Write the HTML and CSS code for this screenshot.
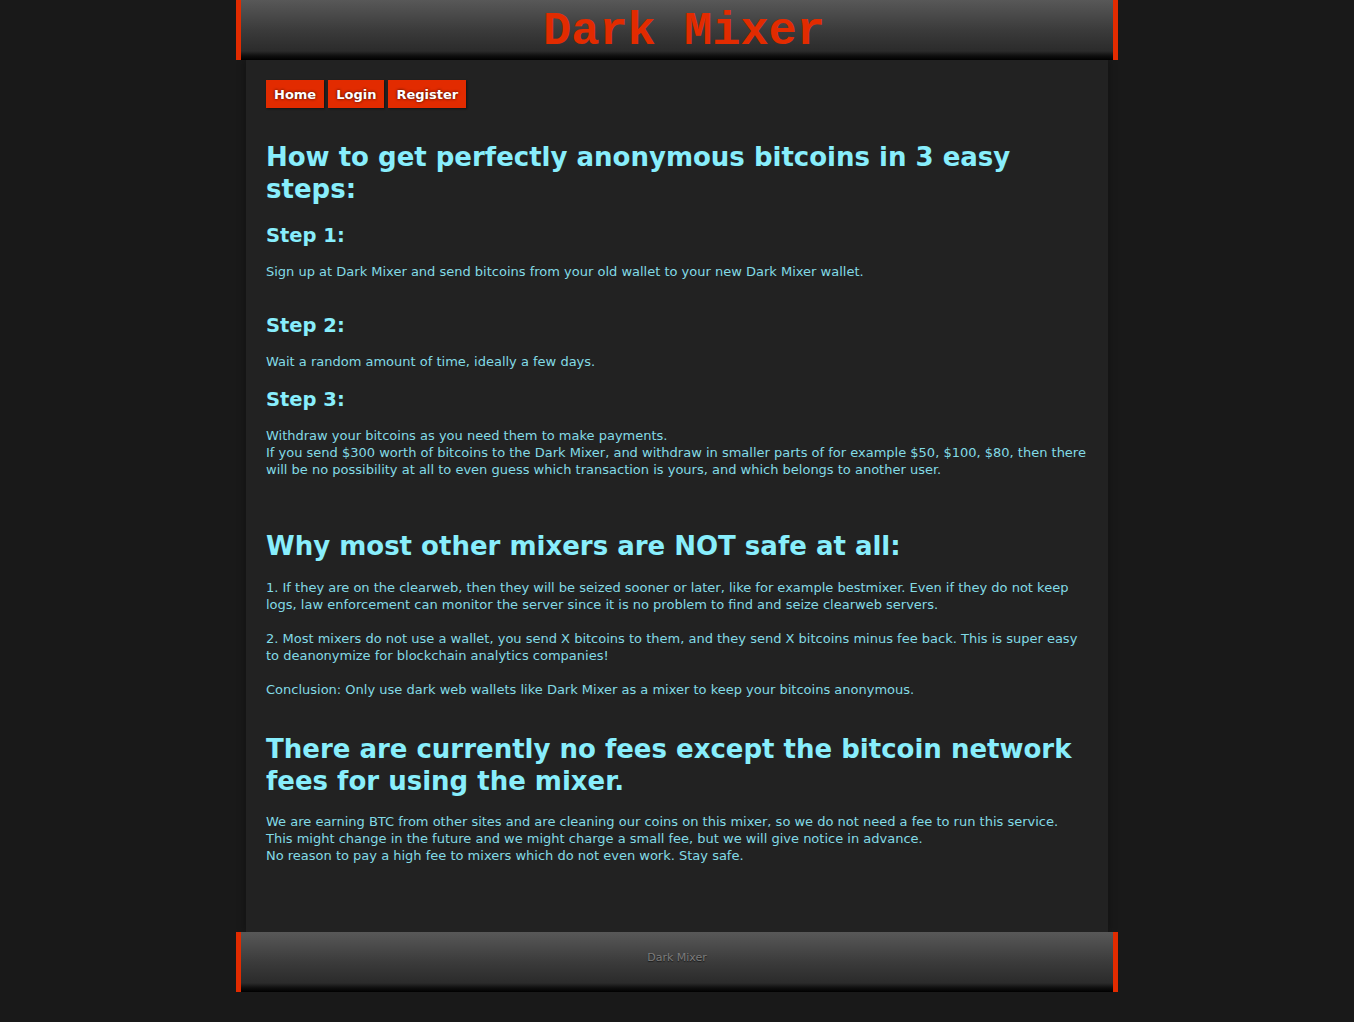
FILE: index.html
```html
<!DOCTYPE html>
<html lang="en">
<head>
<meta charset="utf-8">
<title>Dark Mixer</title>
<link rel="stylesheet" href="styles.css">
</head>
<body>
<div class="page">
  <header class="bar header">
    <div class="logo">Dark Mixer</div>
  </header>
  <main class="content">
    <nav class="nav">
      <a class="btn" href="#">Home</a>
      <a class="btn" href="#">Login</a>
      <a class="btn" href="#">Register</a>
    </nav>

    <h1 class="h1">How to get perfectly anonymous bitcoins in 3 easy steps:</h1>
    <h3 class="h3">Step 1:</h3>
    <p class="txt txt-extra">Sign up at Dark Mixer and send bitcoins from your old wallet to your new Dark Mixer wallet.</p>
    <h3 class="h3">Step 2:</h3>
    <p class="txt txt-tight">Wait a random amount of time, ideally a few days.</p>
    <h3 class="h3">Step 3:</h3>
    <p class="txt">Withdraw your bitcoins as you need them to make payments.<br>If you send $300 worth of bitcoins to the Dark Mixer, and withdraw in smaller parts of for example $50, $100, $80, then there will be no possibility at all to even guess which transaction is yours, and which belongs to another user.</p>

    <h1 class="h1 h1-far">Why most other mixers are NOT safe at all:</h1>
    <p class="txt">1. If they are on the clearweb, then they will be seized sooner or later, like for example bestmixer. Even if they do not keep logs, law enforcement can monitor the server since it is no problem to find and seize clearweb servers.</p>
    <p class="txt">2. Most mixers do not use a wallet, you send X bitcoins to them, and they send X bitcoins minus fee back. This is super easy to deanonymize for blockchain analytics companies!</p>
    <p class="txt">Conclusion: Only use dark web wallets like Dark Mixer as a mixer to keep your bitcoins anonymous.</p>

    <h1 class="h1 h1-mid">There are currently no fees except the bitcoin network fees for using the mixer.</h1>
    <p class="txt">We are earning BTC from other sites and are cleaning our coins on this mixer, so we do not need a fee to run this service.<br>This might change in the future and we might charge a small fee, but we will give notice in advance.<br>No reason to pay a high fee to mixers which do not even work. Stay safe.</p>
  </main>
  <footer class="bar footer">
    <span class="foot-text">Dark Mixer</span>
  </footer>
</div>
</body>
</html>
```

FILE: styles.css
```css
html, body {
  margin: 0;
  padding: 0;
  background: #191919;
}

body {
  font-family: "DejaVu Sans", "Noto Sans", sans-serif;
  font-size: 13px;
  min-height: 1022px;
}

.page {
  width: 882px;
  margin: 0 auto;
}

.bar {
  height: 60px;
  box-sizing: border-box;
  border-left: 5px solid #e22b00;
  border-right: 5px solid #e22b00;
  background: linear-gradient(to bottom, #585858 0%, #3b3b3b 50%, #2b2b2b 85%, #0f0f0f 93%, #000 100%);
  display: flex;
  align-items: center;
  justify-content: center;
  position: relative;
  z-index: 1;
}

.logo {
  font-family: "Liberation Mono", "Courier New", monospace;
  font-weight: bold;
  font-size: 47px;
  line-height: 60px;
  color: #e22b00;
  padding-left: 14px;
  margin-top: 3px;
}

.content {
  display: block;
  margin: 0 10px;
  background: #222222;
  padding: 20px 20px 51px;
  box-shadow: 0 0 8px rgba(0, 0, 0, 0.35);
}

.nav {
  display: flex;
  gap: 4px;
  margin-bottom: 33px;
}

.btn {
  display: block;
  height: 28px;
  box-sizing: border-box;
  padding: 0 8px;
  line-height: 29px;
  background: #e22b00;
  color: #ffffff;
  font-weight: bold;
  font-size: 13px;
  text-decoration: none;
  text-shadow: 0 0 3px rgba(0, 0, 0, 0.8);
  box-shadow: 1px 1px 2px rgba(0, 0, 0, 0.45);
}

.h1 {
  font-size: 26px;
  line-height: 32px;
  font-weight: bold;
  color: #88eefc;
  margin: 0 0 16.5px;
}

.h1-far {
  margin-top: 52px;
  margin-bottom: 17.5px;
}

.h1-mid {
  margin-top: 35px;
  margin-bottom: 15.5px;
}

.h3 {
  font-size: 19.5px;
  line-height: 27px;
  font-weight: bold;
  color: #88eefc;
  margin: 0 0 14px;
}

.txt {
  font-size: 13px;
  line-height: 17px;
  color: #82dbe6;
  margin: 0 0 17px;
}

.txt-extra {
  margin-bottom: 32px;
}

.txt-tight {
  margin-bottom: 16px;
}

.foot-text {
  font-size: 11px;
  color: #7c7c7c;
  text-shadow: 0 1px 1px rgba(0, 0, 0, 0.6);
  margin-top: -8px;
}
```
